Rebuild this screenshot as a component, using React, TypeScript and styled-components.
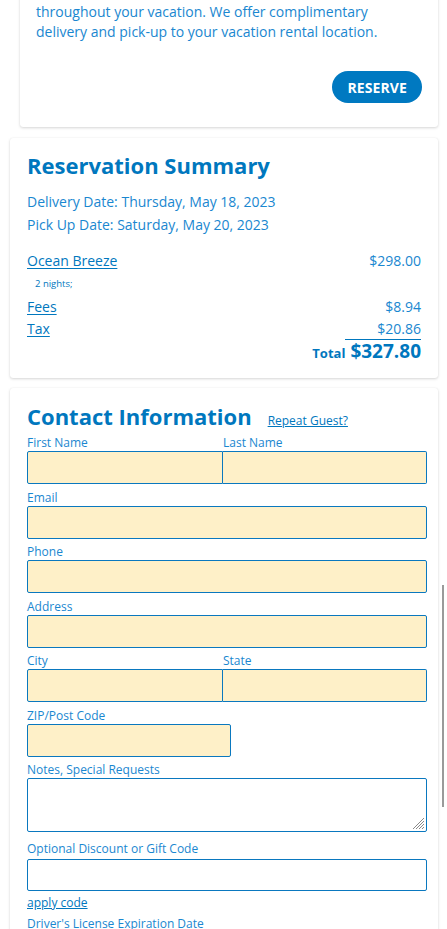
import React from "react";
import styled, { createGlobalStyle } from "styled-components";

const Global = createGlobalStyle`
  html, body { margin: 0; padding: 0; background: #ffffff; overflow: hidden; }
  body { font-family: "Open Sans", "Liberation Sans", sans-serif; }
  * { box-sizing: border-box; }
`;

const TITLE = "#0077be";
const TEXT = "#1a87d0";
const BORDER = "#0a78bf";

const Page = styled.div`
  display: flex;
  flex-direction: column;
  gap: 10px;
  padding: 0 9px 20px 10px;
  margin-top: -12px;
`;

const Card = styled.section<{ $indent?: number; $padRight?: number; $padTop?: number; $padBottom?: number }>`
  background: #fff;
  margin-left: ${(p) => p.$indent ?? 0}px;
  border-radius: 3px;
  box-shadow: 0 1px 3px rgba(0, 0, 0, 0.16), 0 0 1px rgba(0, 0, 0, 0.08);
  padding: ${(p) => p.$padTop ?? 12}px ${(p) => p.$padRight ?? 17}px ${(p) => p.$padBottom ?? 18}px 17px;
`;

const IntroCard = styled(Card)`
  padding: 14px 16px 24px 16px;
  margin-bottom: 1px;
  display: flex;
  flex-direction: column;
`;

const IntroText = styled.p`
  margin: 0;
  font-size: 14px;
  line-height: 20px;
  color: ${TEXT};
`;

const ReserveButton = styled.button`
  align-self: flex-end;
  margin-top: 29px;
  height: 32px;
  padding: 0 15px;
  border: none;
  border-radius: 16px;
  background: #0079c1;
  color: #fff;
  font-family: "Open Sans", sans-serif;
  font-weight: 700;
  font-size: 14px;
  letter-spacing: 0.1px;
`;

const Title = styled.h2`
  margin: 0;
  font-size: 22px;
  line-height: 30px;
  font-weight: 700;
  color: ${TITLE};
`;

const DateLine = styled.div`
  font-size: 14px;
  line-height: 23px;
  color: ${TEXT};
`;

const Dates = styled.div`
  margin-top: 10px;
  margin-bottom: 14px;
`;

const LineRow = styled.div`
  display: flex;
  justify-content: space-between;
  align-items: baseline;
  font-size: 14px;
  line-height: 22px;
  color: ${TEXT};
`;

const ItemLink = styled.a`
  color: ${TITLE};
  text-decoration: underline;
  text-underline-offset: 2px;
`;

const SubNote = styled.div`
  font-size: 9.5px;
  line-height: 24px;
  padding-left: 8px;
  color: ${TITLE};
`;

const Amount = styled.span<{ $rule?: boolean }>`
  color: ${TEXT};
  ${(p) => (p.$rule ? `border-bottom: 1px solid ${TITLE}; padding-left: 32px; line-height: 20px;` : "")}
`;

const TotalRow = styled.div`
  display: flex;
  justify-content: flex-end;
  align-items: baseline;
  gap: 5px;
  color: ${TITLE};
  font-weight: 700;
  margin-top: -1px;
`;

const TotalLabel = styled.span`
  font-size: 13px;
`;

const TotalValue = styled.span`
  font-size: 19px;
  line-height: 24px;
`;

const TitleRow = styled.div`
  display: flex;
  align-items: baseline;
  gap: 16px;
`;

const SmallLink = styled.a`
  font-size: 12px;
  color: ${TITLE};
  text-decoration: underline;
`;

const Field = styled.div<{ $width?: string; $spaced?: boolean }>`
  display: flex;
  flex-direction: column;
  width: ${(p) => p.$width ?? "100%"};
  margin-bottom: 4.5px;
  ${(p) => (p.$spaced ? "margin-top: 3px; gap: 2px;" : "")}
`;

const Label = styled.label`
  font-size: 12px;
  line-height: 17px;
  color: ${TEXT};
`;

const Input = styled.div<{ $filled?: boolean; $h?: number }>`
  height: ${(p) => p.$h ?? 33}px;
  border: 1px solid ${BORDER};
  border-radius: 2px;
  background: ${(p) => (p.$filled ? "#fef0c8" : "#ffffff")};
  position: relative;
`;

const Pair = styled.div`
  display: grid;
  grid-template-columns: 196px 1fr;
`;

const PairInput = styled(Input)<{ $side: "l" | "r" }>`
  border-radius: ${(p) => (p.$side === "l" ? "2px 0 0 2px" : "0 2px 2px 0")};
  ${(p) => (p.$side === "r" ? "border-left: none;" : "")}
`;

const Grip = styled.svg`
  position: absolute;
  right: 1px;
  bottom: 1px;
`;

const ApplyLink = styled(SmallLink)`
  font-size: 12px;
  line-height: 17px;
  margin-top: -1px;
  margin-bottom: 4px;
`;

const Form = styled.div`
  display: flex;
  flex-direction: column;
  margin-top: 3px;
`;

const ScrollThumb = styled.div`
  position: fixed;
  left: 442px;
  top: 585px;
  width: 2px;
  height: 222px;
  background: #9a9a9a;
`;

function PairField({ a, b }: { a: string; b: string }) {
  return (
    <Field>
      <Pair>
        <Label>{a}</Label>
        <Label>{b}</Label>
      </Pair>
      <Pair>
        <PairInput $filled $side="l" />
        <PairInput $filled $side="r" />
      </Pair>
    </Field>
  );
}

export default function App() {
  return (
    <>
      <Global />
      <Page>
        <IntroCard $indent={10}>
          <IntroText>
            throughout your vacation. We offer complimentary
            <br />
            delivery and pick-up to your vacation rental location.
          </IntroText>
          <ReserveButton>RESERVE</ReserveButton>
        </IntroCard>

        <Card $padBottom={15}>
          <Title>Reservation Summary</Title>
          <Dates>
            <DateLine>Delivery Date: Thursday, May 18, 2023</DateLine>
            <DateLine>Pick Up Date: Saturday, May 20, 2023</DateLine>
          </Dates>
          <LineRow>
            <ItemLink>Ocean Breeze</ItemLink>
            <Amount>$298.00</Amount>
          </LineRow>
          <SubNote>2 nights;</SubNote>
          <LineRow>
            <ItemLink>Fees</ItemLink>
            <Amount>$8.94</Amount>
          </LineRow>
          <LineRow>
            <ItemLink>Tax</ItemLink>
            <Amount $rule>$20.86</Amount>
          </LineRow>
          <TotalRow>
            <TotalLabel>Total</TotalLabel>
            <TotalValue>$327.80</TotalValue>
          </TotalRow>
        </Card>

        <Card $padRight={11} $padTop={13}>
          <TitleRow>
            <Title>Contact Information</Title>
            <SmallLink>Repeat Guest?</SmallLink>
          </TitleRow>
          <Form>
            <PairField a="First Name" b="Last Name" />
            <Field>
              <Label>Email</Label>
              <Input $filled />
            </Field>
            <Field>
              <Label>Phone</Label>
              <Input $filled />
            </Field>
            <Field>
              <Label>Address</Label>
              <Input $filled />
            </Field>
            <PairField a="City" b="State" />
            <Field $width="204px">
              <Label>ZIP/Post Code</Label>
              <Input $filled />
            </Field>
            <Field>
              <Label>Notes, Special Requests</Label>
              <Input $h={54}>
                <Grip width="14" height="14" viewBox="0 0 14 14">
                  <g stroke="#8a8a8a" strokeWidth="1">
                    <line x1="13" y1="2" x2="2" y2="13" />
                    <line x1="13" y1="5" x2="5" y2="13" />
                    <line x1="13" y1="8" x2="8" y2="13" />
                    <line x1="13" y1="11" x2="11" y2="13" />
                  </g>
                </Grip>
              </Input>
            </Field>
            <Field $spaced>
              <Label>Optional Discount or Gift Code</Label>
              <Input $h={32} />
            </Field>
            <ApplyLink>apply code</ApplyLink>
            <Label>Driver's License Expiration Date</Label>
          </Form>
        </Card>
      </Page>
      <ScrollThumb />
    </>
  );
}
